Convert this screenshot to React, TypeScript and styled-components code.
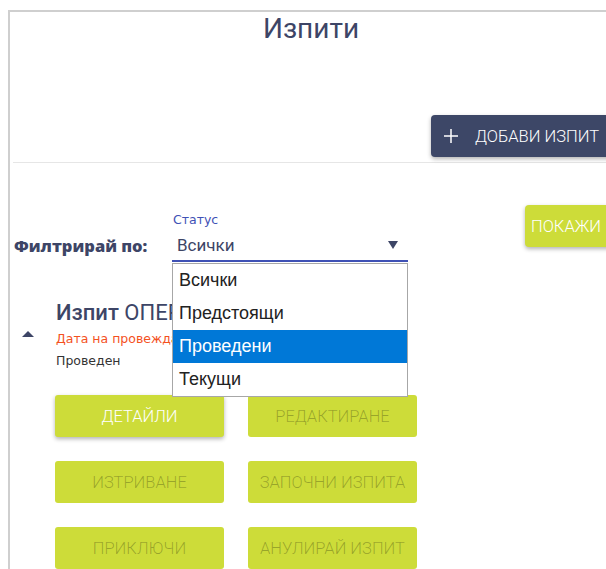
import React from 'react'
import styled, { createGlobalStyle, css } from 'styled-components'

const statuses = ['Всички', 'Предстоящи', 'Проведени', 'Текущи']

const actions = [
  { label: 'Детайли', enabled: true },
  { label: 'Редактиране', enabled: false },
  { label: 'Изтриване', enabled: false },
  { label: 'Започни изпита', enabled: false },
  { label: 'Приключи', enabled: false },
  { label: 'Анулирай изпит', enabled: false },
]

export default function App() {
  return (
    <>
      <GlobalStyle />
      <Frame>
        <Header>
          <Title>Изпити</Title>
          <HeaderActions>
            <AddButton>
              <PlusIcon />
              Добави изпит
            </AddButton>
          </HeaderActions>
        </Header>

        <Divider />

        <FilterBar>
          <FilterLabel>Филтрирай по:</FilterLabel>
          <SelectField>
            <FieldLabel>Статус</FieldLabel>
            <SelectValue>
              Всички
              <Caret />
            </SelectValue>
            <Options>
              {statuses.map((s) => (
                <Option key={s} $active={s === 'Проведени'}>
                  {s}
                </Option>
              ))}
            </Options>
          </SelectField>
          <ShowButton>Покажи</ShowButton>
        </FilterBar>

        <ExamCard>
          <Toggle />
          <ExamBody>
            <ExamTitle>
              <strong>Изпит</strong> ОПЕРАЦИОННИ СИСТЕМИ
            </ExamTitle>
            <ExamDate>Дата на провеждане: 12.06.2019</ExamDate>
            <ExamStatus>Проведен</ExamStatus>
            <Actions>
              {actions.map((a) => (
                <ActionButton key={a.label} $enabled={a.enabled}>
                  {a.label}
                </ActionButton>
              ))}
            </Actions>
          </ExamBody>
        </ExamCard>
      </Frame>
    </>
  )
}

function PlusIcon() {
  return (
    <PlusSvg viewBox="0 0 16 16">
      <path d="M8 1v14M1 8h14" stroke="currentColor" strokeWidth="1.5" fill="none" />
    </PlusSvg>
  )
}

///////////////////////////////////////////////////////////////////////////////////

const navy = '#3d4566'
const lime = '#cddc39'

const GlobalStyle = createGlobalStyle`
  html, body {
    margin: 0;
    padding: 0;
    background: #fff;
    overflow: hidden;
  }
  body {
    font-family: Roboto, 'Noto Sans', sans-serif;
    color: #333;
  }
`

const Frame = styled.div`
  margin: 10px 0 0 8px;
  width: 602px;
  min-height: 600px;
  border-left: 2px solid #cfcfcf;
  border-top: 2px solid #cfcfcf;
`

const Header = styled.header`
  display: flex;
  flex-direction: column;
`

const Title = styled.h1`
  margin: 0;
  text-align: center;
  font-size: 28px;
  line-height: 34px;
  font-weight: 400;
  color: ${navy};
`

const HeaderActions = styled.div`
  display: flex;
  justify-content: flex-end;
  margin-top: 69px;
`

const AddButton = styled.button`
  display: flex;
  align-items: center;
  gap: 16px;
  height: 42px;
  width: 181px;
  padding: 0 12px;
  border: none;
  border-radius: 4px;
  background: #3d4767;
  color: #fff;
  font-family: Roboto, sans-serif;
  font-weight: 300;
  font-size: 16.5px;
  white-space: nowrap;
  text-transform: uppercase;
  box-shadow: 0 2px 4px rgba(0, 0, 0, 0.3);
`

const PlusSvg = styled.svg`
  width: 16px;
  height: 16px;
  flex: none;
`

const Divider = styled.hr`
  margin: 5px 0 0 3px;
  border: none;
  height: 1px;
  background: #e6e6e6;
`

const FilterBar = styled.div`
  display: flex;
  align-items: flex-start;
  margin-top: 42px;
  padding-left: 4px;
`

const FilterLabel = styled.div`
  flex: 0 0 158px;
  margin-top: 30px;
  font-family: 'Open Sans', sans-serif;
  font-weight: 800;
  font-size: 16.5px;
  line-height: 22px;
  color: ${navy};
`

const SelectField = styled.div`
  position: relative;
  width: 236px;
  margin-top: 7px;
  border-bottom: 2px solid #3f51b5;
  padding-bottom: 3px;
`

const FieldLabel = styled.div`
  padding-left: 1px;
  font-family: 'DejaVu Sans', sans-serif;
  font-size: 12.5px;
  line-height: 16px;
  color: #3f51b5;
`

const SelectValue = styled.div`
  display: flex;
  align-items: center;
  justify-content: space-between;
  margin-top: 5px;
  padding: 0 10px 0 5px;
  font-size: 17px;
  line-height: 24px;
  color: ${navy};
`

const Caret = styled.span`
  width: 0;
  height: 0;
  border-left: 5px solid transparent;
  border-right: 5px solid transparent;
  border-top: 8px solid ${navy};
`

const Options = styled.ul`
  position: absolute;
  top: calc(100% + 3px);
  left: 0;
  z-index: 2;
  width: 236px;
  box-sizing: border-box;
  margin: 0;
  padding: 0;
  list-style: none;
  background: #fff;
  border: 1px solid #a7a7a7;
`

const Option = styled.li<{ $active?: boolean }>`
  height: 33px;
  display: flex;
  align-items: center;
  padding-left: 6px;
  font-family: 'Liberation Sans', Arial, sans-serif;
  font-size: 18px;
  color: #222;

  ${(p) =>
    p.$active &&
    css`
      background: #0078d7;
      color: #fff;
    `}
`

const ShowButton = styled.button`
  margin-left: auto;
  height: 42px;
  width: 87px;
  padding: 0 6px;
  text-align: left;
  border: none;
  border-radius: 4px;
  background: ${lime};
  color: #fff;
  font-family: Roboto, sans-serif;
  font-weight: 300;
  font-size: 16.5px;
  text-transform: uppercase;
  box-shadow: 0 2px 4px rgba(0, 0, 0, 0.3);
`

const ExamCard = styled.section`
  display: flex;
  margin-top: 36px;
`

const Toggle = styled.span`
  flex: none;
  margin: 33px 22px 0 12px;
  width: 0;
  height: 0;
  border-left: 6px solid transparent;
  border-right: 6px solid transparent;
  border-bottom: 6px solid ${navy};
`

const ExamBody = styled.div`
  display: flex;
  flex-direction: column;
`

const ExamTitle = styled.h2`
  margin: 0;
  font-size: 22px;
  line-height: 29px;
  font-weight: 400;
  color: ${navy};
  white-space: nowrap;

  strong {
    font-weight: 500;
  }
`

const ExamDate = styled.div`
  margin-top: 3px;
  font-family: 'DejaVu Sans', sans-serif;
  font-size: 12.5px;
  line-height: 18px;
  color: #f4511e;
  white-space: nowrap;
`

const ExamStatus = styled.div`
  margin-top: 4px;
  font-family: 'DejaVu Sans', sans-serif;
  font-size: 12.5px;
  line-height: 18px;
  color: #333;
`

const Actions = styled.div`
  display: grid;
  grid-template-columns: repeat(2, 169px);
  grid-auto-rows: 42px;
  gap: 24px;
  margin: 25px 0 0 -1px;
`

const ActionButton = styled.button<{ $enabled?: boolean }>`
  border: none;
  border-radius: 3px;
  background: ${lime};
  font-family: Roboto, sans-serif;
  font-weight: 300;
  font-size: 16.5px;
  white-space: nowrap;
  text-transform: uppercase;
  color: ${(p) => (p.$enabled ? '#fff' : 'rgba(0, 0, 0, 0.26)')};
  box-shadow: ${(p) => (p.$enabled ? '0 2px 4px rgba(0, 0, 0, 0.3)' : 'none')};
`
